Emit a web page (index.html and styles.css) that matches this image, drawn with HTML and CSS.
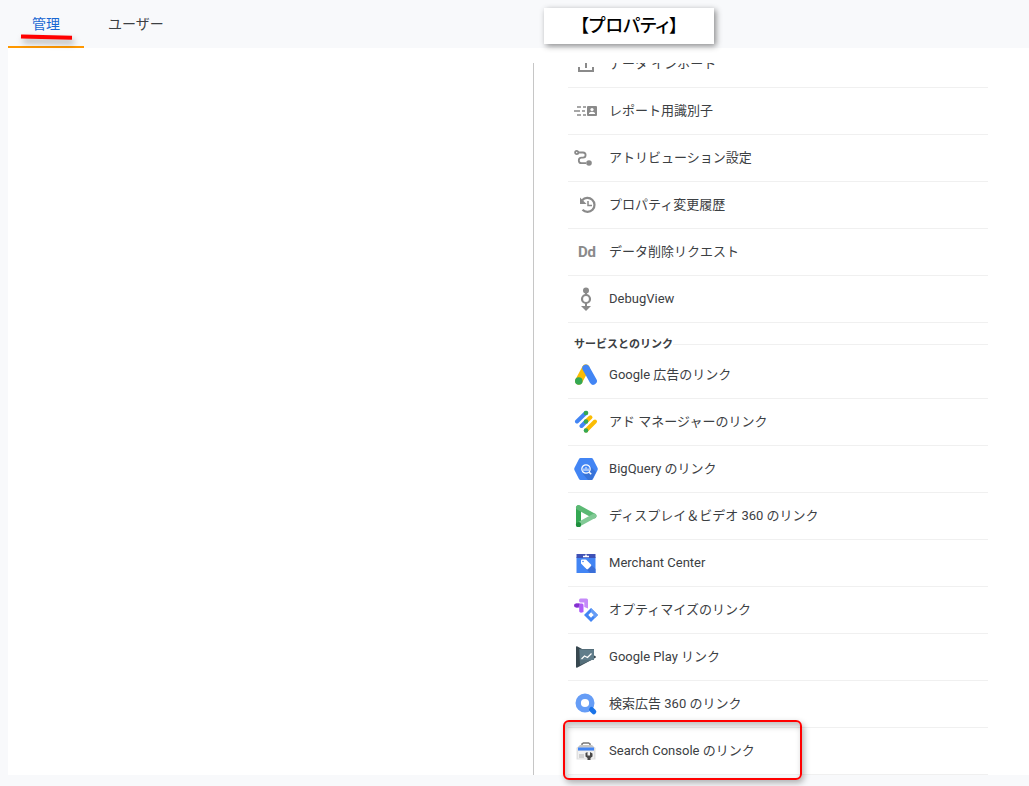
FILE: index.html
```html
<!DOCTYPE html>
<html lang="ja">
<head>
<meta charset="utf-8">
<meta name="viewport" content="width=device-width, initial-scale=1">
<title>管理</title>
<link rel="stylesheet" href="styles.css">
</head>
<body>
<nav class="tabs">
  <a class="tab tab-active" href="#admin">管理
    <svg class="marker" viewBox="0 0 60 16" aria-hidden="true"><path d="M7 4.600L54 5.800" stroke="#f00" stroke-width="4" stroke-linecap="square"/></svg>
  </a>
  <a class="tab" href="#user">ユーザー</a>
</nav>
<div class="callout">【プロパティ】</div>
<main class="panel">
  <section class="account"></section>
  <section class="property">
    <ul class="list">
      <li><a class="row" href="#import"><svg class="icon" viewBox="0 0 24 24"><path d="M12 16V6m-4 4 4-4 4 4M5 15v4h14v-4" fill="none" stroke="#8a8a8a" stroke-width="2"/></svg>データ インポート</a></li>
      <li><a class="row" href="#identity"><svg class="icon" viewBox="0 0 24 24"><path d="M3 8h4m2 0h3M0 12h6m2 0h3M3 16h4m2 0h3" stroke="#8a8a8a" stroke-width="1.500"/><rect x="13" y="7" width="10" height="10" rx="1" fill="#8a8a8a"/><circle cx="18" cy="10.500" r="1.600" fill="#fff"/><path d="M15 15v-1q3-2.500 6 0v1z" fill="#fff"/></svg>レポート用識別子</a></li>
      <li><a class="row" href="#attribution"><svg class="icon" viewBox="0 0 24 24"><g fill="none" stroke="#8a8a8a" stroke-width="1.800"><circle cx="2.700" cy="6.500" r="1.600"/><path d="M4.500 6.500H9a2.600 2.600 0 0 1 0 5.200H7.500a2.700 2.700 0 0 0 0 5.400H12"/></g><circle cx="15" cy="17" r="2.800" fill="#8a8a8a"/></svg>アトリビューション設定</a></li>
      <li><a class="row" href="#history"><svg class="icon" viewBox="0 0 24 24"><path d="M8.200 7.300A7 7 0 1 1 8.500 16.800" fill="none" stroke="#8a8a8a" stroke-width="2.200"/><path d="M6 4.500v6.500h6.500z" fill="#8a8a8a"/><path d="M14 8v4.500h4" fill="none" stroke="#8a8a8a" stroke-width="1.500"/></svg>プロパティ変更履歴</a></li>
      <li><a class="row" href="#deletion"><span class="icon icon-text">Dd</span>データ削除リクエスト</a></li>
      <li><a class="row" href="#debug"><svg class="icon" viewBox="0 0 24 24"><circle cx="12" cy="3.500" r="3" fill="#8a8a8a"/><path d="M12 4v4m0 8v5" stroke="#8a8a8a" stroke-width="2"/><circle cx="12" cy="12" r="4" fill="none" stroke="#8a8a8a" stroke-width="2.200"/><path d="M7 19h10l-5 5z" fill="#8a8a8a"/></svg>DebugView</a></li>
    </ul>
    <h2 class="heading"><span>サービスとのリンク</span></h2>
    <ul class="list">
      <li><a class="row" href="#ads"><svg class="icon" viewBox="0 0 24 24"><path d="M11.800 5 4.800 18" stroke="#fbbc04" stroke-width="7.400" stroke-linecap="round"/><path d="M12 5.300 19.200 18" stroke="#4285f4" stroke-width="7.400" stroke-linecap="round"/><circle cx="4.800" cy="18" r="3.800" fill="#34a853"/></svg>Google 広告のリンク</a></li>
      <li><a class="row" href="#admanager"><svg class="icon" viewBox="0 0 24 24"><g fill="none" stroke-width="4" stroke-linecap="round"><path d="M3 11.500 12 2.800M7.500 16 12 11.500" stroke="#4285f4"/><path d="m12 11.500 4.500-4.200M12 20.500l9-9" stroke="#fbbc04"/></g><g fill="#34a853"><circle cx="12" cy="3" r="2.300"/><circle cx="12" cy="11.500" r="2.300"/><circle cx="12" cy="20.500" r="2.300"/></g></svg>アド マネージャーのリンク</a></li>
      <li><a class="row" href="#bigquery"><svg class="icon" viewBox="0 0 24 24"><path d="M6.500 1h11q1 0 1.500 1l4.600 9q.4 1 0 2L19 22q-.5 1-1.500 1h-11q-1 0-1.500-1L.4 13q-.4-1 0-2L5 2q.5-1 1.500-1z" fill="#4285f4"/><path d="m16 9 6 6-4 8h-4l-5-6z" fill="#3268c5" opacity=".6"/><circle cx="12" cy="12" r="4.200" fill="#4285f4" stroke="#fff" stroke-width="1.200"/><path d="M10 11.500V14m2-4v4m2-2.500V14" stroke="#fff" stroke-width="1"/><path d="m15.200 15.200 2 2" stroke="#fff" stroke-width="1.600"/></svg>BigQuery のリンク</a></li>
      <li><a class="row" href="#dv360"><svg class="icon" viewBox="0 0 24 24"><path d="M4.500 4v16.500" stroke="#34a853" stroke-width="5" stroke-linecap="round"/><path d="M4.500 3.500 20 12" stroke="#5bb974" stroke-width="5" stroke-linecap="round"/><path d="M4.500 20.500 20 12" stroke="#81c995" stroke-width="4.800" stroke-linecap="round"/><circle cx="4.500" cy="20.500" r="2.600" fill="#1e8e3e"/></svg>ディスプレイ＆ビデオ 360 のリンク</a></li>
      <li><a class="row" href="#merchant"><svg class="icon" viewBox="0 0 24 24"><path d="M2.500 6h19v16h-19z" fill="#4285f4"/><path d="m11 8 10.500 10v4H16l-5-5z" fill="#3a6fd8"/><path d="M2.500 3h19v4h-19z" fill="#3f51b5"/><path d="M9 5.500h6M12 3.500v2" stroke="#fff" stroke-width="1.500"/><path d="M7 9.500q0-1 1-1h4l5 5q.8.800 0 1.600l-3 3q-.8.800-1.600 0L7 12.600z" fill="#fff"/><circle cx="9" cy="10.500" r=".8" fill="#4285f4"/></svg>Merchant Center</a></li>
      <li><a class="row" href="#optimize"><svg class="icon" viewBox="0 0 24 24"><path d="M6.500 .5H12.500q1.500 0 1.500 1.500V10.500L10.300 9V4.500H6.500q-1.500 0-1.500-2t1.500-2z" fill="#c58af9"/><path d="M2 5.500h6q1.500 0 1.500 1.500v7q-3.500 1.500-4.300-.5V9.500H2z" fill="#af5cf7"/><path d="M2 5.500h3.500l-1 4H2a2 2 0 0 1 0-4z" fill="#8430ce"/><path d="m17 10 7 7-7 7-7-7z" fill="#4285f4"/><path d="m17 10 7 7-3 3-4-3.500z" fill="#669df6"/><path d="m17 14.300 2.700 2.700-2.700 2.700-2.700-2.700z" fill="#fff"/></svg>オプティマイズのリンク</a></li>
      <li><a class="row" href="#play"><svg class="icon" viewBox="0 0 24 24"><path d="M2 2q0-1 1-.800l18.500 10q1 .8 0 1.600L3 22.800q-1 .2-1-.800z" fill="#37474f"/><path d="M5 4h15v10L6 20z" fill="#546e7a"/><path d="M6 5h14v10H6z" fill="#607d8b"/><path d="m7.500 14 3-3 3 1.500 4-4" fill="none" stroke="#fff" stroke-width="1.200"/></svg>Google Play リンク</a></li>
      <li><a class="row" href="#sa360"><svg class="icon" viewBox="0 0 24 24"><circle cx="11" cy="11" r="6.800" fill="none" stroke="#669df6" stroke-width="5.400"/><path d="m17.500 17.500 2.300 2.300" stroke="#1a73e8" stroke-width="5" stroke-linecap="round"/></svg>検索広告 360 のリンク</a></li>
      <li class="marked"><a class="row" href="#console"><svg class="icon" viewBox="0 0 24 24"><path d="M8 6.500V5L9.500 4h5L16 5v1.500" fill="none" stroke="#777" stroke-width="1.500"/><path d="M2.500 9.500 6 6h12l3.500 3.500z" fill="#c4c4c4"/><path d="M2.500 8.500h19v12h-19z" fill="#e0e0e0"/><path d="M4 8.500h16v3H4z" fill="#4285f4"/><path d="M4 12h16v7.500H4z" fill="#f1f1f1"/><path d="M5 15h5v4H5z" fill="#d0d0d0"/><path d="M11.500 14 13.500 13v3.500h2.500V13l2.500 1.500v3L16.500 19v2h-3v-2l-2-1.500z" fill="#484848"/></svg>Search Console のリンク</a></li>
    </ul>
  </section>
</main>
</body>
</html>
```
FILE: styles.css
```css
*, *::before, *::after { box-sizing: border-box; }

body {
  margin: 0;
  height: 100vh;
  display: flex;
  flex-direction: column;
  padding: 0 0 11px 8px;
  background: #f8f9fb;
  color: #3c4043;
  font-family: Roboto, "Noto Sans CJK JP", sans-serif;
  font-size: 13px;
  line-height: 20px;
}

a { color: inherit; text-decoration: none; }

.tabs { display: flex; flex: none; }

.tab {
  position: relative;
  height: 48px;
  padding: 0 24px;
  font-size: 14px;
  line-height: 48px;
}

.tab-active {
  color: #1967d2;
  border-bottom: 2px solid #ff9800;
}

.marker {
  position: absolute;
  left: 8px;
  top: 32px;
  width: 60px;
  height: 16px;
  overflow: visible;
  filter: drop-shadow(2px 4px 3px rgba(0, 0, 0, .35));
}

.callout {
  position: absolute;
  left: 544px;
  top: 8px;
  width: 170px;
  height: 36px;
  background: #fff;
  box-shadow: 2px 2px 6px rgba(0, 0, 0, .45);
  color: #000;
  font-size: 18px;
  font-weight: 500;
  font-feature-settings: "palt";
  line-height: 36px;
  text-align: center;
}

.panel {
  flex: 1;
  min-height: 0;
  display: grid;
  grid-template-columns: 18fr 17fr;
  grid-template-rows: minmax(0, 1fr);
  padding-top: 15px;
  background: #fff;
}

/* Clips rows scrolled past the top; the bottom stays open for the highlight frame. */
.property {
  display: flex;
  flex-direction: column;
  justify-content: flex-end;
  min-height: 0;
  clip-path: inset(0 0 -11px 0);
  padding: 0 41px 0 34px;
  border-left: 1px solid #c6c6c6;
}

.list {
  flex: none;
  margin: 0;
  padding: 0;
  list-style: none;
}

.row {
  display: flex;
  align-items: center;
  gap: 11px;
  height: 47px;
  padding-left: 6px;
  border-bottom: 1px solid #f0f0f0;
}

.icon {
  flex: none;
  width: 24px;
  height: 24px;
}

.icon-text {
  padding-right: 2px;
  color: #8a8a8a;
  font-size: 15px;
  font-weight: 700;
  line-height: 24px;
  text-align: right;
}

.heading {
  flex: none;
  display: flex;
  align-items: center;
  height: 29px;
  margin: 0;
  padding: 13px 0 0 6px;
  font-size: 11px;
  font-weight: 700;
  line-height: 16px;
}

.heading span { padding-top: 2px; }

.heading::after {
  content: "";
  flex: 1;
  height: 1px;
  background: #f0f0f0;
}

.marked { position: relative; }

.marked::after {
  content: "";
  position: absolute;
  left: -5px;
  top: -8px;
  width: 239px;
  height: 60px;
  border: 2px solid #f00;
  border-radius: 6px;
  box-shadow: 2px 3px 6px rgba(0, 0, 0, .3), inset 2px 4px 6px rgba(0, 0, 0, .25);
  pointer-events: none;
}
```
